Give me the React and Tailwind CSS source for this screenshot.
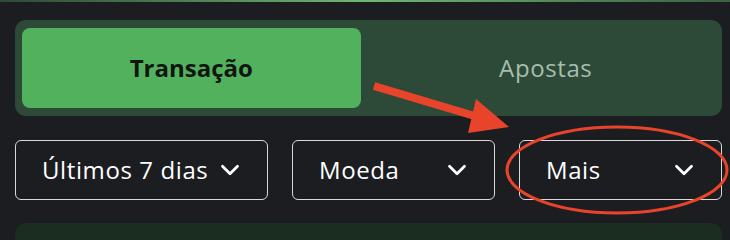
import { ChevronDown } from 'lucide-react';

const filters = [
  { label: 'Últimos 7 dias', width: 'w-[253px]' },
  { label: 'Moeda', width: 'w-[203px]' },
  { label: 'Mais', width: 'w-[203px]' },
];

const App = () => {
  return (
    <div className="relative w-[730px] h-[240px] overflow-hidden bg-[#1c1d21] font-['Open_Sans',sans-serif]">
      {/* top glow line */}
      <div className="h-[2px] bg-gradient-to-r from-[#2f4a36] via-[#6fb873] to-[#3b6143]" />

      <div className="pl-[15px] pr-[8px] pt-[18px]">
        {/* tabs */}
        <div className="grid grid-cols-2 gap-4 h-[96px] px-[7px] py-2 rounded-[11px] bg-[#2c4a37]">
          <button className="rounded-[8px] bg-[#52b15c] text-[#111512] text-[24px] font-bold">
            Transação
          </button>
          <button className="rounded-[8px] text-[#a7bead] text-[24px] tracking-[0.6px]">
            Apostas
          </button>
        </div>

        {/* filters */}
        <div className="flex gap-6 mt-6">
          {filters.map((f) => (
            <div
              key={f.label}
              className={`${f.width} h-[60px] flex items-center justify-between px-[26px] rounded-[6px] border-[1.5px] border-[#d9d9d9] text-white text-[24px] tracking-[0.6px]`}
            >
              <span>{f.label}</span>
              <ChevronDown size={30} strokeWidth={2.2} className="-mr-1" />
            </div>
          ))}
        </div>

        {/* next panel */}
        <div className="mt-[23px] h-[60px] rounded-[11px] bg-[#1b2c21]" />
      </div>

      {/* annotation */}
      <svg className="absolute inset-0 pointer-events-none" width="730" height="240" viewBox="0 0 730 240">
        <line x1="374" y1="86" x2="478" y2="117" stroke="#e8432b" strokeWidth="8" />
        <polygon points="476,99 509,127 468,133" fill="#e8432b" />
        <ellipse cx="617" cy="170" rx="110" ry="43" fill="none" stroke="#e8432b" strokeWidth="3" />
      </svg>
    </div>
  );
};

export default App;
